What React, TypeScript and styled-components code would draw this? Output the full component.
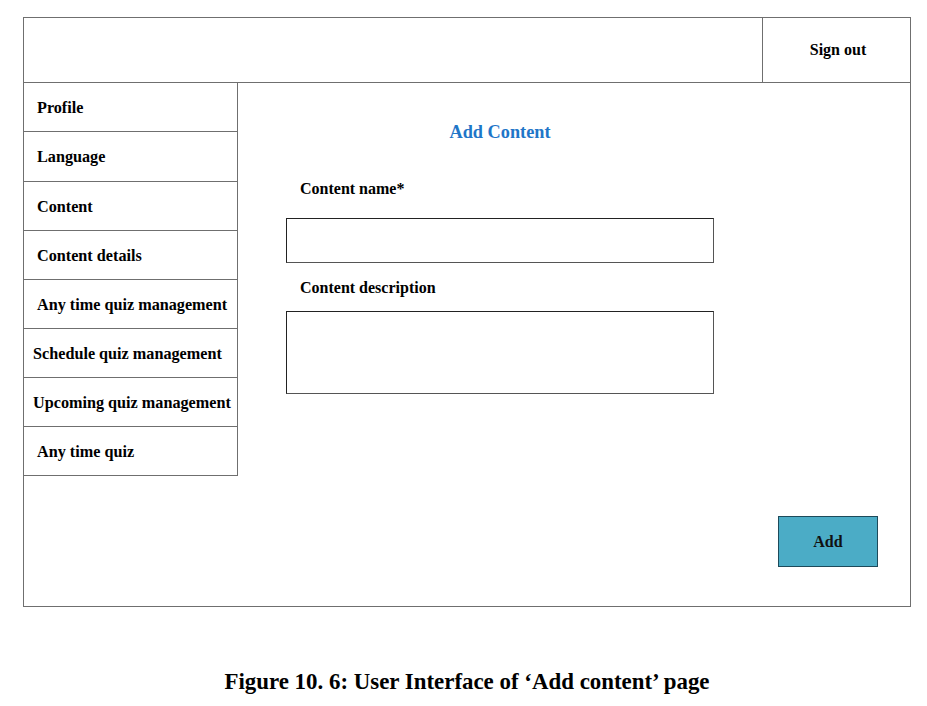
import React, { FunctionComponent } from 'react';
import styled, { createGlobalStyle } from 'styled-components';

const GlobalStyle = createGlobalStyle`
    html, body {
        margin: 0;
        padding: 0;
        background: #fff;
    }

    * {
        box-sizing: border-box;
    }
`;

const StyledPage = styled.div`
    width: 927px;
    min-height: 706px;
    padding: 17px 0 0 23px;
    font-family: 'Liberation Serif', 'Times New Roman', serif;
    font-weight: bold;
    color: #000;
`;

const StyledFrame = styled.div`
    width: 888px;
    height: 590px;
    border: 1px solid #6f6f6f;
    display: flex;
    flex-direction: column;
`;

const StyledHeader = styled.div`
    height: 65px;
    border-bottom: 1px solid #6f6f6f;
    display: flex;
    justify-content: flex-end;
`;

const StyledSignOut = styled.div`
    width: 148px;
    border-left: 1px solid #6f6f6f;
    display: flex;
    align-items: center;
    justify-content: center;
    padding-left: 3px;
    font-size: 16px;
`;

const StyledBody = styled.div`
    flex: 1;
    display: flex;
`;

const StyledSidebar = styled.div`
    width: 214px;
    align-self: flex-start;
    border-right: 1px solid #6f6f6f;
    display: flex;
    flex-direction: column;
`;

const StyledMenuItem = styled.div<{ $tight?: boolean; $tall?: boolean }>`
    height: ${({ $tall }) => ($tall ? '50px' : '49px')};
    border-bottom: 1px solid #6f6f6f;
    display: flex;
    align-items: center;
    padding-top: 2px;
    padding-left: ${({ $tight }) => ($tight ? '9px' : '13px')};
    font-size: 16.2px;
    white-space: nowrap;
`;

const StyledMain = styled.div`
    flex: 1;
    display: flex;
    flex-direction: column;
    padding: 38px 32px 39px 48px;
`;

const StyledForm = styled.div`
    width: 428px;
    display: flex;
    flex-direction: column;
`;

const StyledTitle = styled.div`
    text-align: center;
    font-size: 18.3px;
    line-height: 22px;
    color: #1f76c8;
    margin-bottom: 36px;
`;

const StyledLabel = styled.div<{ $gap: number }>`
    font-size: 16px;
    line-height: 20px;
    padding-left: 14px;
    margin-bottom: ${({ $gap }) => $gap}px;
`;

const StyledField = styled.div<{ $height: number }>`
    height: ${({ $height }) => $height}px;
    border: 1px solid #555;
    border-top-color: #222;
    border-left-color: #222;
    margin-bottom: 15px;
`;

const StyledActions = styled.div`
    margin-top: auto;
    display: flex;
    justify-content: flex-end;
`;

const StyledAddButton = styled.div`
    width: 100px;
    height: 51px;
    background: #4bacc6;
    border: 1px solid #1d4a5a;
    display: flex;
    align-items: center;
    justify-content: center;
    font-size: 16px;
    color: #111;
`;

const StyledCaption = styled.div`
    width: 888px;
    margin-top: 62px;
    text-align: center;
    font-size: 22.9px;
    line-height: 26px;
`;

const menuItems = [
    { label: 'Profile' },
    { label: 'Language', tall: true },
    { label: 'Content' },
    { label: 'Content details' },
    { label: 'Any time quiz management' },
    { label: 'Schedule quiz management', tight: true },
    { label: 'Upcoming quiz management', tight: true },
    { label: 'Any time quiz' }
];

const App: FunctionComponent = () => {
    return (
        <StyledPage>
            <GlobalStyle />
            <StyledFrame>
                <StyledHeader>
                    <StyledSignOut>Sign out</StyledSignOut>
                </StyledHeader>
                <StyledBody>
                    <StyledSidebar>
                        {menuItems.map((item) => (
                            <StyledMenuItem
                                key={item.label}
                                $tight={item.tight}
                                $tall={item.tall}
                            >
                                {item.label}
                            </StyledMenuItem>
                        ))}
                    </StyledSidebar>
                    <StyledMain>
                        <StyledForm>
                            <StyledTitle>Add Content</StyledTitle>
                            <StyledLabel $gap={19}>Content name*</StyledLabel>
                            <StyledField $height={45} />
                            <StyledLabel $gap={13}>Content description</StyledLabel>
                            <StyledField $height={83} />
                        </StyledForm>
                        <StyledActions>
                            <StyledAddButton>Add</StyledAddButton>
                        </StyledActions>
                    </StyledMain>
                </StyledBody>
            </StyledFrame>
            <StyledCaption>Figure 10. 6: User Interface of ‘Add content’ page</StyledCaption>
        </StyledPage>
    );
};

export default App;
